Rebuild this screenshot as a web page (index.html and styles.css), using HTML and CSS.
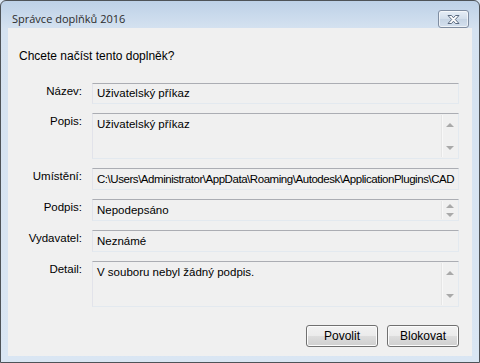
FILE: index.html
```html
<!DOCTYPE html>
<html lang="cs">
<head>
  <meta charset="UTF-8">
  <title>Správce doplňků 2016</title>
  <link rel="stylesheet" href="styles.css">
</head>
<body>
<div class="window">
  <div class="titlebar">
    <span class="title">Správce doplňků 2016</span>
    <button class="close" aria-label="Zavřít">
      <svg width="15" height="11" viewBox="0 0 15 11">
        <path d="M2 1.5 H5.5 L7.5 3.8 L9.5 1.5 H13 L9.3 5.5 L13 9.5 H9.5 L7.5 7.2 L5.5 9.5 H2 L5.7 5.5 Z" fill="#fff" stroke="#5a6a80" stroke-width="1" stroke-linejoin="round"/>
      </svg>
    </button>
  </div>

  <div class="client">
    <p class="question">Chcete načíst tento doplněk?</p>

    <div class="fields">
      <label class="label">Název:</label>
      <div class="field single">Uživatelský příkaz</div>

      <label class="label">Popis:</label>
      <div class="field multi">
        <span class="value">Uživatelský příkaz</span>
        <span class="scroll"><i class="up"></i><i class="down"></i></span>
      </div>

      <label class="label">Umístění:</label>
      <div class="field box path">C:\Users\Administrator\AppData\Roaming\Autodesk\ApplicationPlugins\CAD</div>

      <label class="label">Podpis:</label>
      <div class="field box">
        <span class="value">Nepodepsáno</span>
        <span class="scroll small"><i class="up"></i><i class="down"></i></span>
      </div>

      <label class="label">Vydavatel:</label>
      <div class="field box">Neznámé</div>

      <label class="label">Detail:</label>
      <div class="field multi">
        <span class="value">V souboru nebyl žádný podpis.</span>
        <span class="scroll"><i class="up"></i><i class="down"></i></span>
      </div>
    </div>

    <div class="buttons">
      <button class="btn">Povolit</button>
      <button class="btn">Blokovat</button>
    </div>
  </div>
</div>
</body>
</html>
```

FILE: styles.css
```css
body {
  margin: 0;
  background: #dae6f3;
  font-family: "Liberation Sans", Arial, sans-serif;
  font-size: 12px;
  color: #000;
}

.window {
  width: 480px;
  height: 363px;
  box-sizing: border-box;
  border: 1px solid #4e5358;
  border-radius: 6px 6px 0 0;
  padding: 0 7px 7px 7px;
  background: linear-gradient(#bdd1e7, #d5e2f0 28px, #dae6f3);
  display: flex;
  flex-direction: column;
}

.titlebar {
  height: 29px;
  display: flex;
  align-items: flex-start;
  justify-content: space-between;
}

.title {
  font-family: "Open Sans", "Liberation Sans", sans-serif;
  font-size: 11px;
  line-height: 16px;
  padding: 10px 0 0 4px;
  color: #2b2b2b;
}

.close {
  margin: 9px 3px 0 0;
  width: 31px;
  height: 18px;
  padding: 0;
  border: 1px solid #7f8da1;
  border-radius: 3px;
  background: linear-gradient(#e6eef7, #d2deeb 50%, #c6d4e4 51%, #d4e0ee);
  box-shadow: inset 0 0 0 1px rgba(255,255,255,0.6);
  display: flex;
  align-items: center;
  justify-content: center;
}

.client {
  flex: 1;
  background: #f0f0f0;
  padding: 21px 13px 9px 11px;
  display: flex;
  flex-direction: column;
}

.question {
  margin: 0 0 19px 0;
  line-height: 15px;
}

.fields {
  display: grid;
  grid-template-columns: 73px 1fr;
  grid-template-rows: 21px 46px 22px 22px 22px 46px;
  row-gap: 9px;
  font-size: 11.5px;
}

.label {
  text-align: right;
  padding: 1px 10px 0 0;
  line-height: 15px;
}

.field {
  box-sizing: border-box;
  border: 1px solid #e3e9ef;
  border-top-color: #abadb3;
  border-left-color: #e2e3ea;
  padding: 2px 4px 0 4px;
  line-height: 15px;
  white-space: nowrap;
  overflow: hidden;
  position: relative;
}

.field.box,
.field.multi {
  padding-top: 3px;
}

.field.path {
  letter-spacing: -0.45px;
  padding-right: 0;
}

.scroll {
  position: absolute;
  top: 1px;
  right: 1px;
  bottom: 1px;
  width: 15px;
  border-left: 1px solid #f8f8f8;
  box-shadow: -1px 0 0 #e6e6e6;
  display: flex;
  flex-direction: column;
  justify-content: space-between;
  align-items: center;
  padding: 8px 0 7px 0;
  box-sizing: border-box;
}

.scroll.small {
  padding: 3px 0 2px 0;
}

.scroll i {
  width: 0;
  height: 0;
  border-left: 4px solid transparent;
  border-right: 4px solid transparent;
}

.scroll .up {
  border-bottom: 4px solid #a9a9a9;
}

.scroll .down {
  border-top: 4px solid #a9a9a9;
}

.buttons {
  display: flex;
  justify-content: flex-end;
  gap: 9px;
  margin-top: 18px;
}

.btn {
  width: 72px;
  height: 22px;
  border: 1px solid #707070;
  border-radius: 3px;
  background: linear-gradient(#f2f2f2, #ebebeb 50%, #dddddd 51%, #cfcfcf);
  box-shadow: inset 0 0 0 1px #fcfcfc;
  font-family: "Liberation Sans", Arial, sans-serif;
  font-size: 12px;
  color: #000;
  padding: 0;
}
```
